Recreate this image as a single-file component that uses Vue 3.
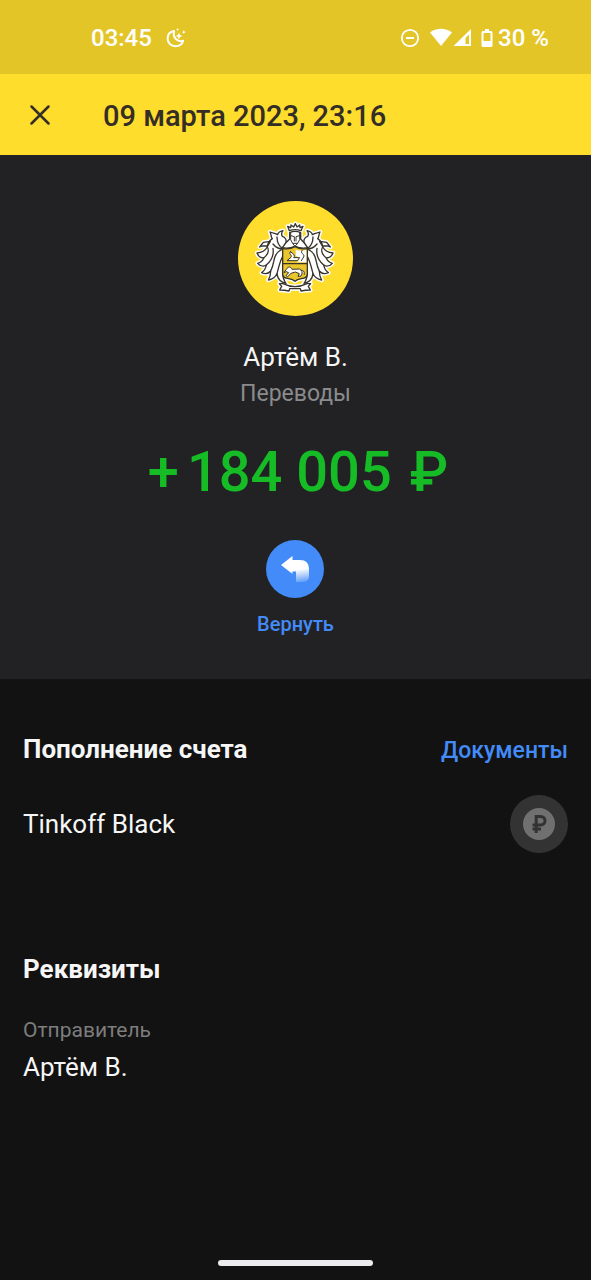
<script setup>
const operation = {
  date: '09 марта 2023, 23:16',
  name: 'Артём В.',
  category: 'Переводы',
  amount: '184 005',
  account: 'Tinkoff Black'
}
</script>

<template>
  <div class="screen">
    <div class="status">
      <div class="status-group">
        <span class="clock">03:45</span>
        <svg class="moon" viewBox="0 0 20 20" aria-hidden="true">
          <path d="M8 3C4.400 3.600 1.600 6.300 1.600 10.500C1.600 14.900 5 18.200 9.400 18.200C13.200 18.200 16.300 16 17.200 12.800C11.600 14.500 6.400 9.600 8 3Z" fill="none" stroke="#fff" stroke-width="2" stroke-linejoin="round" />
          <path d="M13 4.600l1 2.400 2.400 1-2.400 1-1 2.400-1-2.400-2.400-1 2.400-1z" fill="#fff" />
          <path d="M17.800 2.200l.6 1.300 1.300.6-1.300.6-.6 1.300-.6-1.300-1.300-.6 1.300-.6zM11.600 0l.5 1 1 .5-1 .5-.5 1-.5-1-1-.5 1-.5z" fill="#fff" />
        </svg>
      </div>
      <div class="status-group icons">
        <svg class="dnd" viewBox="0 0 20 20" aria-hidden="true">
          <circle cx="10" cy="10" r="8.200" fill="none" stroke="#fff" stroke-width="1.800" />
          <path d="M6 10h8" stroke="#fff" stroke-width="2" />
        </svg>
        <svg class="network" viewBox="0 0 42 20" aria-hidden="true">
          <path d="M0 4.500C6.500-.5 15.500-.5 22 4.500L11 18Z" fill="#fff" />
          <path fill-rule="evenodd" d="M41 1V18H23.500ZM39 6.500L35.500 10V16H39Z" fill="#fff" />
        </svg>
        <svg class="battery" viewBox="0 0 12 20" aria-hidden="true">
          <path fill-rule="evenodd" d="M4 1H8V3H10Q11.500 3 11.500 4.500V17.500Q11.500 19 10 19H2Q.5 19 .5 17.500V4.500Q.5 3 2 3H4ZM2.500 5V13H9.500V5Z" fill="#fff" />
        </svg>
        <span class="percent">30 %</span>
      </div>
    </div>

    <header class="header">
      <button class="close" type="button" aria-label="Закрыть">
        <svg viewBox="0 0 20 20"><path d="M1.500 1.500L18.500 18.500M18.500 1.500L1.500 18.500" fill="none" stroke="#352e27" stroke-width="2.500" stroke-linecap="round" /></svg>
      </button>
      <h1>{{ operation.date }}</h1>
    </header>

    <section class="hero">
      <div class="avatar">
        <svg viewBox="0 0 246 228" aria-hidden="true">
          <defs>
            <g id="mantle">
              <path d="M92 68C96 56 90 48 82 46C78 40 80 34 84 29C74 31 69 35 68 41C62 36 54 37 45 33C50 41 47 48 52 53C44 58 38 66 37 78C30 90 18 95 6 96C10 106 18 111 26 111C23 120 15 125 8 127C16 136 27 137 34 132C32 143 27 150 20 155C30 160 41 157 47 150C47 161 44 170 40 177C52 174 62 167 66 158C68 174 78 184 93 187C86 178 83 168 83 154V82Z" />
              <path d="M14 78L25 64L46 61L38 75L22 75ZM84 84C72 76 66 62 66 48M84 84C72 84 62 79 54 69M84 84C64 92 58 104 56 122C54 134 51 142 47 150M37 78C43 88 39 101 26 111M54 82C57 101 48 120 34 132M82 108C74 124 70 142 66 158" />
            </g>
            <path id="shield" d="M83 82Q101 87 120 77Q139 87 157 82V158Q157 171 139 173Q126 175 120 181Q114 175 101 173Q83 171 83 158Z" />
            <path id="ribbon" d="M84 188Q102 197 120 197Q138 197 156 188L167 188L160 196L166 207Q152 207 138 210L136 203H104L102 210Q88 207 74 207L80 196L73 188Z" />
            <path id="helmet" d="M104 35Q120 27 137 35V54L148 66L158 80Q138 84 120 76Q102 84 82 80L92 66L104 54Z" />
            <path id="crown" d="M103 29L98 16L107 20L108 12L116 18L121 8L126 18L134 12L135 20L144 16L138 29Q120 23 103 29Z" />
          </defs>
          <g fill="#fff" stroke="#fff" stroke-width="13" stroke-linejoin="round">
            <use href="#mantle" />
            <use href="#mantle" transform="translate(240 0) scale(-1 1)" />
            <use href="#shield" /><use href="#ribbon" /><use href="#helmet" /><use href="#crown" />
          </g>
          <g fill="#fff" stroke="#37342c" stroke-width="4" stroke-linejoin="round" stroke-linecap="round">
            <g fill="none">
              <use href="#mantle" />
              <use href="#mantle" transform="translate(240 0) scale(-1 1)" />
            </g>
            <use href="#helmet" /><use href="#crown" /><use href="#ribbon" />
            <use href="#shield" class="gold" />
            <path d="M122 86Q140 91 154 86V124H121C137 121 134 109 122 104Z" stroke="none" />
            <path d="M84 128H156" />
            <path d="M107 36V56Q112 68 120 76Q129 68 134 56V36M108 44L118 47V60M133 44L123 47V60M114 67H127" fill="none" stroke-width="3" />
            <path d="M106 92C99 100 113 101 108 109L96 119H127L134 110L116 110Q124 103 106 92M141 88C134 99 151 98 146 108L139 119" stroke-width="3" />
            <path d="M94 145C100 134 108 137 111 145L133 144C142 146 143 156 138 165L129 166L133 158L121 153L108 157L98 167L93 164L101 155L94 152L88 154ZM138 148Q149 146 148 160" stroke-width="3" />
          </g>
        </svg>
      </div>
      <div class="name">{{ operation.name }}</div>
      <div class="category">{{ operation.category }}</div>
      <div class="amount"><span>+</span><span>{{ operation.amount }}</span><span class="currency">₽</span></div>
      <button class="return" type="button">
        <span class="return-circle">
          <svg viewBox="0 0 30 28" aria-hidden="true">
            <defs>
              <linearGradient id="tail" x1="21" y1="14" x2="23" y2="27" gradientUnits="userSpaceOnUse">
                <stop offset="0" stop-color="#fff" />
                <stop offset="1" stop-color="#fff" stop-opacity=".15" />
              </linearGradient>
            </defs>
            <path d="M1 10L12.500 1V5H20Q29 5 29 14V21Q29 27 23 27H16V16.500H12.500V19Z" fill="url(#tail)" />
          </svg>
        </span>
        Вернуть
      </button>
    </section>

    <main class="details">
      <div class="row heading-row">
        <h2>Пополнение счета</h2>
        <a href="#">Документы</a>
      </div>
      <div class="row account">
        <span>{{ operation.account }}</span>
        <span class="coin">
          <svg viewBox="0 0 32 32" role="img" aria-label="Рубли">
            <circle cx="16" cy="16" r="16" fill="#707070" />
            <path d="M13.200 25V8.500H17.500C23.500 8.500 23.500 17 17.500 17H9.500M9.500 21H18" fill="none" stroke="#333" stroke-width="3" />
          </svg>
        </span>
      </div>
      <h2 class="requisites">Реквизиты</h2>
      <dl>
        <dt>Отправитель</dt>
        <dd>{{ operation.name }}</dd>
      </dl>
    </main>
    <div class="home-bar"></div>
  </div>
</template>

<style>
body {
  background: #121212;
}
</style>

<style scoped>
.screen {
  min-height: 100vh;
  display: flex;
  flex-direction: column;
  background: #121212;
  color: #f6f6f6;
  font-family: Roboto, "Noto Sans", sans-serif;
  font-size: 26px;
  line-height: 32px;
}
h1, h2, dl, dd { margin: 0; }
button {
  border: 0;
  padding: 0;
  background: none;
  font-family: inherit;
  cursor: pointer;
}
svg { display: block; }
.status {
  height: 74px;
  padding: 2px 42px 0 91px;
  box-sizing: border-box;
  display: flex;
  align-items: center;
  justify-content: space-between;
  background: #e4c527;
  color: #fff;
  font-size: 24px;
  line-height: 28px;
  font-weight: 500;
}
.status-group { display: flex; align-items: center; }
.moon { width: 20px; height: 20px; margin-left: 14px; }
.dnd { width: 20px; height: 20px; margin-right: 10px; }
.network { width: 42px; height: 20px; margin-right: 9px; }
.battery { width: 12px; height: 20px; margin-right: 5px; }
.header {
  height: 81px;
  padding: 0 30px;
  box-sizing: border-box;
  display: flex;
  align-items: center;
  gap: 53px;
  background: #ffdd2d;
  color: #352e27;
}
.close svg { width: 20px; height: 20px; }
h1 { font-size: 29px; line-height: 36px; font-weight: 500; padding-top: 2px; }
.hero {
  padding: 46px 24px 42px;
  display: flex;
  flex-direction: column;
  align-items: center;
  background: #222224;
}
.avatar {
  width: 115px;
  height: 115px;
  border-radius: 50%;
  display: flex;
  align-items: center;
  justify-content: center;
  background: #ffdd2d;
}
.avatar svg { width: 82px; height: 76px; }
.gold { fill: #eac52b; }
.name { margin-top: 25px; }
.category { margin-top: 5px; font-size: 23px; color: #8b8b8d; }
.amount {
  margin-top: 28px;
  padding-left: 5px;
  display: flex;
  gap: 8px;
  font-size: 56px;
  line-height: 68px;
  font-weight: 500;
  color: #16bc26;
}
.currency { margin-left: 10px; }
.return {
  margin-top: 34px;
  display: flex;
  flex-direction: column;
  align-items: center;
  gap: 13px;
  color: #438bf8;
  font-size: 20px;
  line-height: 26px;
  font-weight: 500;
}
.return-circle {
  width: 58px;
  height: 58px;
  border-radius: 50%;
  display: flex;
  align-items: center;
  justify-content: center;
  background: #438bf8;
}
.return-circle svg { width: 30px; height: 28px; }
.details { flex: 1; padding: 54px 23px 0; }
.row { display: flex; align-items: center; justify-content: space-between; }
.heading-row { align-items: baseline; }
h2 { font-size: 26px; line-height: 32px; font-weight: 700; }
.heading-row a { font-size: 23px; font-weight: 500; color: #438bf8; text-decoration: none; }
.account { margin-top: 28px; }
.coin {
  width: 58px;
  height: 58px;
  border-radius: 50%;
  display: flex;
  align-items: center;
  justify-content: center;
  background: #333;
}
.coin svg { width: 32px; height: 32px; }
.requisites { margin-top: 100px; }
dl { margin-top: 29px; }
dt { font-size: 21px; color: #7d7d7d; }
dd { margin-top: 5px; }
.home-bar {
  width: 155px;
  height: 6px;
  margin: 0 auto 14px;
  border-radius: 3px;
  background: #ececee;
}
</style>
